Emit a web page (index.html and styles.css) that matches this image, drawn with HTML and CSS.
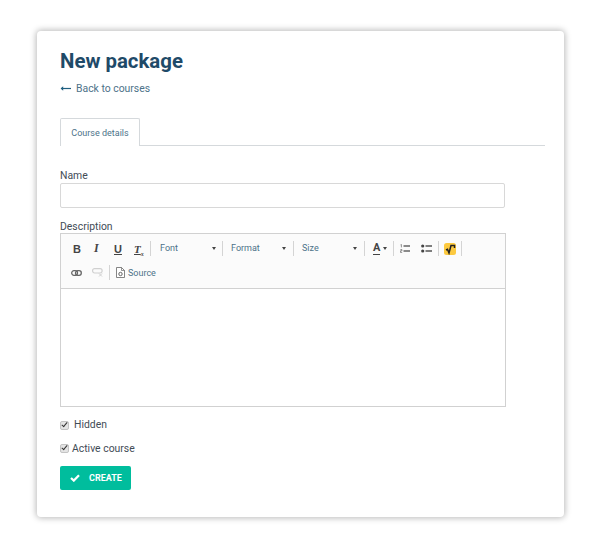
FILE: index.html
```html
<!DOCTYPE html>
<html lang="en">
<head>
    <meta charset="UTF-8">
    <title>New package</title>
    <link rel="stylesheet" href="styles.css">
</head>
<body>
    <div class="card">
        <h1>New package</h1>
        <a class="back-link" href="#">
            <svg width="11" height="7" viewBox="0 0 11 7"><path d="M1 3.5H11" stroke="#1f5f80" stroke-width="1.2"/><path d="M3.2 1.2L.6 3.5L3.2 5.8Z" fill="#1f5f80"/></svg>
            <span>Back to courses</span>
        </a>

        <div class="tabs">
            <div class="tab">Course details</div>
        </div>

        <label class="field-label name-label" for="name">Name</label>
        <input class="text-input" type="text" id="name">

        <div class="field-label desc-label">Description</div>
        <div class="editor">
            <div class="toolbar">
                <div class="toolbar-row">
                    <span class="tool tool-b">B</span>
                    <span class="tool tool-i">I</span>
                    <span class="tool tool-u">U</span>
                    <span class="tool tool-tx">T<sub>x</sub></span>
                    <span class="sep"></span>
                    <span class="combo combo-font">Font<i class="caret"></i></span>
                    <span class="sep"></span>
                    <span class="combo combo-format">Format<i class="caret"></i></span>
                    <span class="sep"></span>
                    <span class="combo combo-size">Size<i class="caret"></i></span>
                    <span class="sep"></span>
                    <span class="tool-color"><span class="color-a">A</span><i class="caret"></i></span>
                    <span class="sep"></span>
                    <svg class="icon-list" width="10" height="9" viewBox="0 0 10 9"><path d="M3.5 2H10M3.5 7H10" stroke="#666" stroke-width="1.5"/><path d="M.6 .8L1.4 .4V3.4M.4 5.6H2V6.8H.4V8.4H2.2" fill="none" stroke="#666" stroke-width=".7"/></svg>
                    <svg class="icon-list icon-bullets" width="11" height="9" viewBox="0 0 11 9"><path d="M4.5 2H11M4.5 7H11" stroke="#555" stroke-width="1.5"/><circle cx="1.7" cy="2" r="1.6" fill="#444"/><circle cx="1.7" cy="7" r="1.6" fill="#444"/></svg>
                    <span class="sep sep-math"></span>
                    <svg class="icon-math" width="12" height="12" viewBox="0 0 12 12"><rect width="12" height="12" rx="2.5" fill="#fcc93f"/><path d="M2 7L3.5 6.3L5 10L7 2.5H10.5V5" fill="none" stroke="#222" stroke-width="1.5"/></svg>
                    <span class="sep"></span>
                </div>
                <div class="toolbar-row row-two">
                    <svg class="icon-link" width="11" height="6" viewBox="0 0 11 6"><rect x=".7" y=".7" width="5.8" height="4.6" rx="2.2" fill="none" stroke="#666" stroke-width="1.3"/><rect x="4.5" y=".7" width="5.8" height="4.6" rx="2.2" fill="none" stroke="#666" stroke-width="1.3"/></svg>
                    <svg class="icon-unlink" width="11" height="9" viewBox="0 0 11 9"><rect x=".6" y=".6" width="9.5" height="4.4" rx="2" fill="none" stroke="#d0d0d0" stroke-width="1.2"/><path d="M7 5.5L10 8.5M10 5.5L7 8.5" stroke="#d0d0d0" stroke-width="1"/></svg>
                    <span class="sep"></span>
                    <svg class="icon-source" width="9" height="11" viewBox="0 0 9 11"><path d="M.5 .5H5.5L8.5 3.5V10.5H.5Z" fill="#fff" stroke="#666" stroke-width=".8"/><path d="M5.5 .5V3.5H8.5" fill="none" stroke="#666" stroke-width=".7"/><circle cx="4.5" cy="7" r="1.7" fill="none" stroke="#555" stroke-width=".9"/></svg>
                    <span class="source-label">Source</span>
                </div>
            </div>
            <div class="editor-body"></div>
        </div>

        <label class="check check-hidden"><input type="checkbox" checked><span>Hidden</span></label>
        <label class="check check-active"><input type="checkbox" checked><span>Active course</span></label>

        <button class="btn-create" type="button">
            <svg width="10" height="8" viewBox="0 0 10 8"><path d="M1 4L3.8 6.6L9 1.2" fill="none" stroke="#fff" stroke-width="2.2"/></svg>
            <span>CREATE</span>
        </button>
    </div>
</body>
</html>
```

FILE: styles.css
```css
html, body {
    margin: 0;
    padding: 0;
    background-color: #fff;
}

body {
    width: 600px;
    height: 546px;
    overflow: hidden;
    font-family: Roboto, "Liberation Sans", sans-serif;
    color: #4a4f55;
}

.card {
    box-sizing: border-box;
    width: 527px;
    height: 486px;
    margin: 31px 0 0 37px;
    padding: 18px 19px 0 23px;
    background-color: #fff;
    border-radius: 4px;
    box-shadow: 0 0 6px 1px rgba(0, 0, 0, 0.28);
}

h1 {
    margin: 0;
    font-size: 20.4px;
    line-height: 24px;
    font-weight: 700;
    color: #1f4a68;
}

.back-link {
    display: flex;
    align-items: center;
    gap: 5px;
    margin-top: 8px;
    height: 14px;
    font-size: 10.4px;
    color: #4d7289;
    text-decoration: none;
}

.tabs {
    margin-top: 23px;
    height: 27px;
    border-bottom: 1px solid #d5d9dc;
}

.tab {
    box-sizing: border-box;
    width: 80px;
    height: 28px;
    padding-top: 8px;
    font-size: 9px;
    line-height: 12px;
    text-align: center;
    color: #4d7289;
    background-color: #fff;
    border: 1px solid #d5d9dc;
    border-bottom: none;
    border-radius: 2px 2px 0 0;
}

.field-label {
    display: block;
    font-size: 10.4px;
    line-height: 13px;
    color: #3f4c56;
}

.name-label {
    margin-top: 23px;
}

.text-input {
    display: block;
    box-sizing: border-box;
    width: 445px;
    height: 25px;
    margin-top: 1px;
    border: 1px solid #d8d8d8;
    border-radius: 2px;
    background-color: #fff;
}

.desc-label {
    margin-top: 12px;
}

.editor {
    box-sizing: border-box;
    width: 446px;
    height: 174px;
    border: 1px solid #d1d1d1;
}

.toolbar {
    box-sizing: border-box;
    height: 55px;
    padding: 6px 0 0 12px;
    background-color: #fbfbfb;
    border-bottom: 1px solid #d1d1d1;
}

.toolbar-row {
    display: flex;
    align-items: center;
    height: 17px;
}

.row-two {
    margin-top: 7px;
}

.tool {
    font-family: "Liberation Sans", sans-serif;
    font-size: 11px;
    color: #444;
}

.tool-b {
    width: 21px;
    font-weight: 700;
}

.tool-i {
    width: 20px;
    font-family: "Liberation Serif", serif;
    font-size: 12px;
    font-weight: 700;
    font-style: italic;
}

.tool-u {
    width: 20px;
    font-weight: 700;
    text-decoration: underline;
}

.tool-tx {
    width: 16px;
    font-family: "Liberation Serif", serif;
    font-size: 11px;
    font-style: italic;
    font-weight: 700;
    text-decoration: underline;
}

.tool-tx sub {
    font-size: 6px;
    line-height: 0;
}

.sep {
    width: 1px;
    height: 15px;
    background-color: #d4d4d4;
}

.combo {
    position: relative;
    display: block;
    box-sizing: border-box;
    padding-left: 8px;
    font-size: 9px;
    line-height: 17px;
    color: #4d7289;
}

.combo-font {
    width: 71px;
    padding-left: 9px;
}

.combo-format {
    width: 70px;
}

.combo-size {
    width: 70px;
}

.caret {
    display: block;
    width: 0;
    height: 0;
    border-left: 2.5px solid transparent;
    border-right: 2.5px solid transparent;
    border-top: 3px solid #444;
}

.combo .caret {
    position: absolute;
    right: 7px;
    top: 7px;
}

.combo-font .caret {
    right: 6px;
}

.tool-color {
    display: flex;
    align-items: center;
    gap: 3px;
    width: 28px;
    padding-left: 8px;
    box-sizing: border-box;
}

.color-a {
    font-size: 11px;
    line-height: 12px;
    font-weight: 700;
    color: #444;
    border-bottom: 1px solid #444;
}

.icon-list {
    margin-left: 6px;
}

.icon-bullets {
    margin-left: 11px;
}

.sep-math {
    margin-left: 6px;
}

.icon-math {
    margin: 0 5px;
}

.icon-link {
    margin-left: -2px;
}

.icon-unlink {
    margin-left: 10px;
    margin-right: 6px;
}

.icon-source {
    margin-left: 6px;
}

.source-label {
    margin-left: 3px;
    font-size: 9px;
    color: #4d7289;
}

.editor-body {
    height: 117px;
    background-color: #fff;
}

.check {
    display: flex;
    align-items: center;
    font-size: 10.4px;
    line-height: 14px;
    color: #3f4c56;
}

.check input {
    position: relative;
    appearance: none;
    box-sizing: border-box;
    width: 9px;
    height: 9px;
    margin: 0;
    background-color: #e4e4e4;
    border: 1px solid #c4c4c4;
    border-radius: 2px;
}

.check input::before {
    content: "";
    position: absolute;
    left: 2px;
    top: -1px;
    width: 2px;
    height: 5px;
    border-right: 1.5px solid #333;
    border-bottom: 1.5px solid #333;
    transform: rotate(40deg);
}

.check-hidden {
    margin-top: 11px;
}

.check-hidden span {
    margin-left: 5px;
}

.check-active {
    margin-top: 10px;
}

.check-active input {
    margin-top: -2px;
}

.check-active span {
    margin-left: 3px;
}

.btn-create {
    display: flex;
    align-items: center;
    box-sizing: border-box;
    width: 71px;
    height: 24px;
    margin-top: 10px;
    padding: 0 0 0 10px;
    gap: 9px;
    border: none;
    border-radius: 2px;
    background-color: #00bd9d;
    color: #fff;
    font-family: Roboto, "Liberation Sans", sans-serif;
    font-size: 9px;
    font-weight: 700;
}
```
